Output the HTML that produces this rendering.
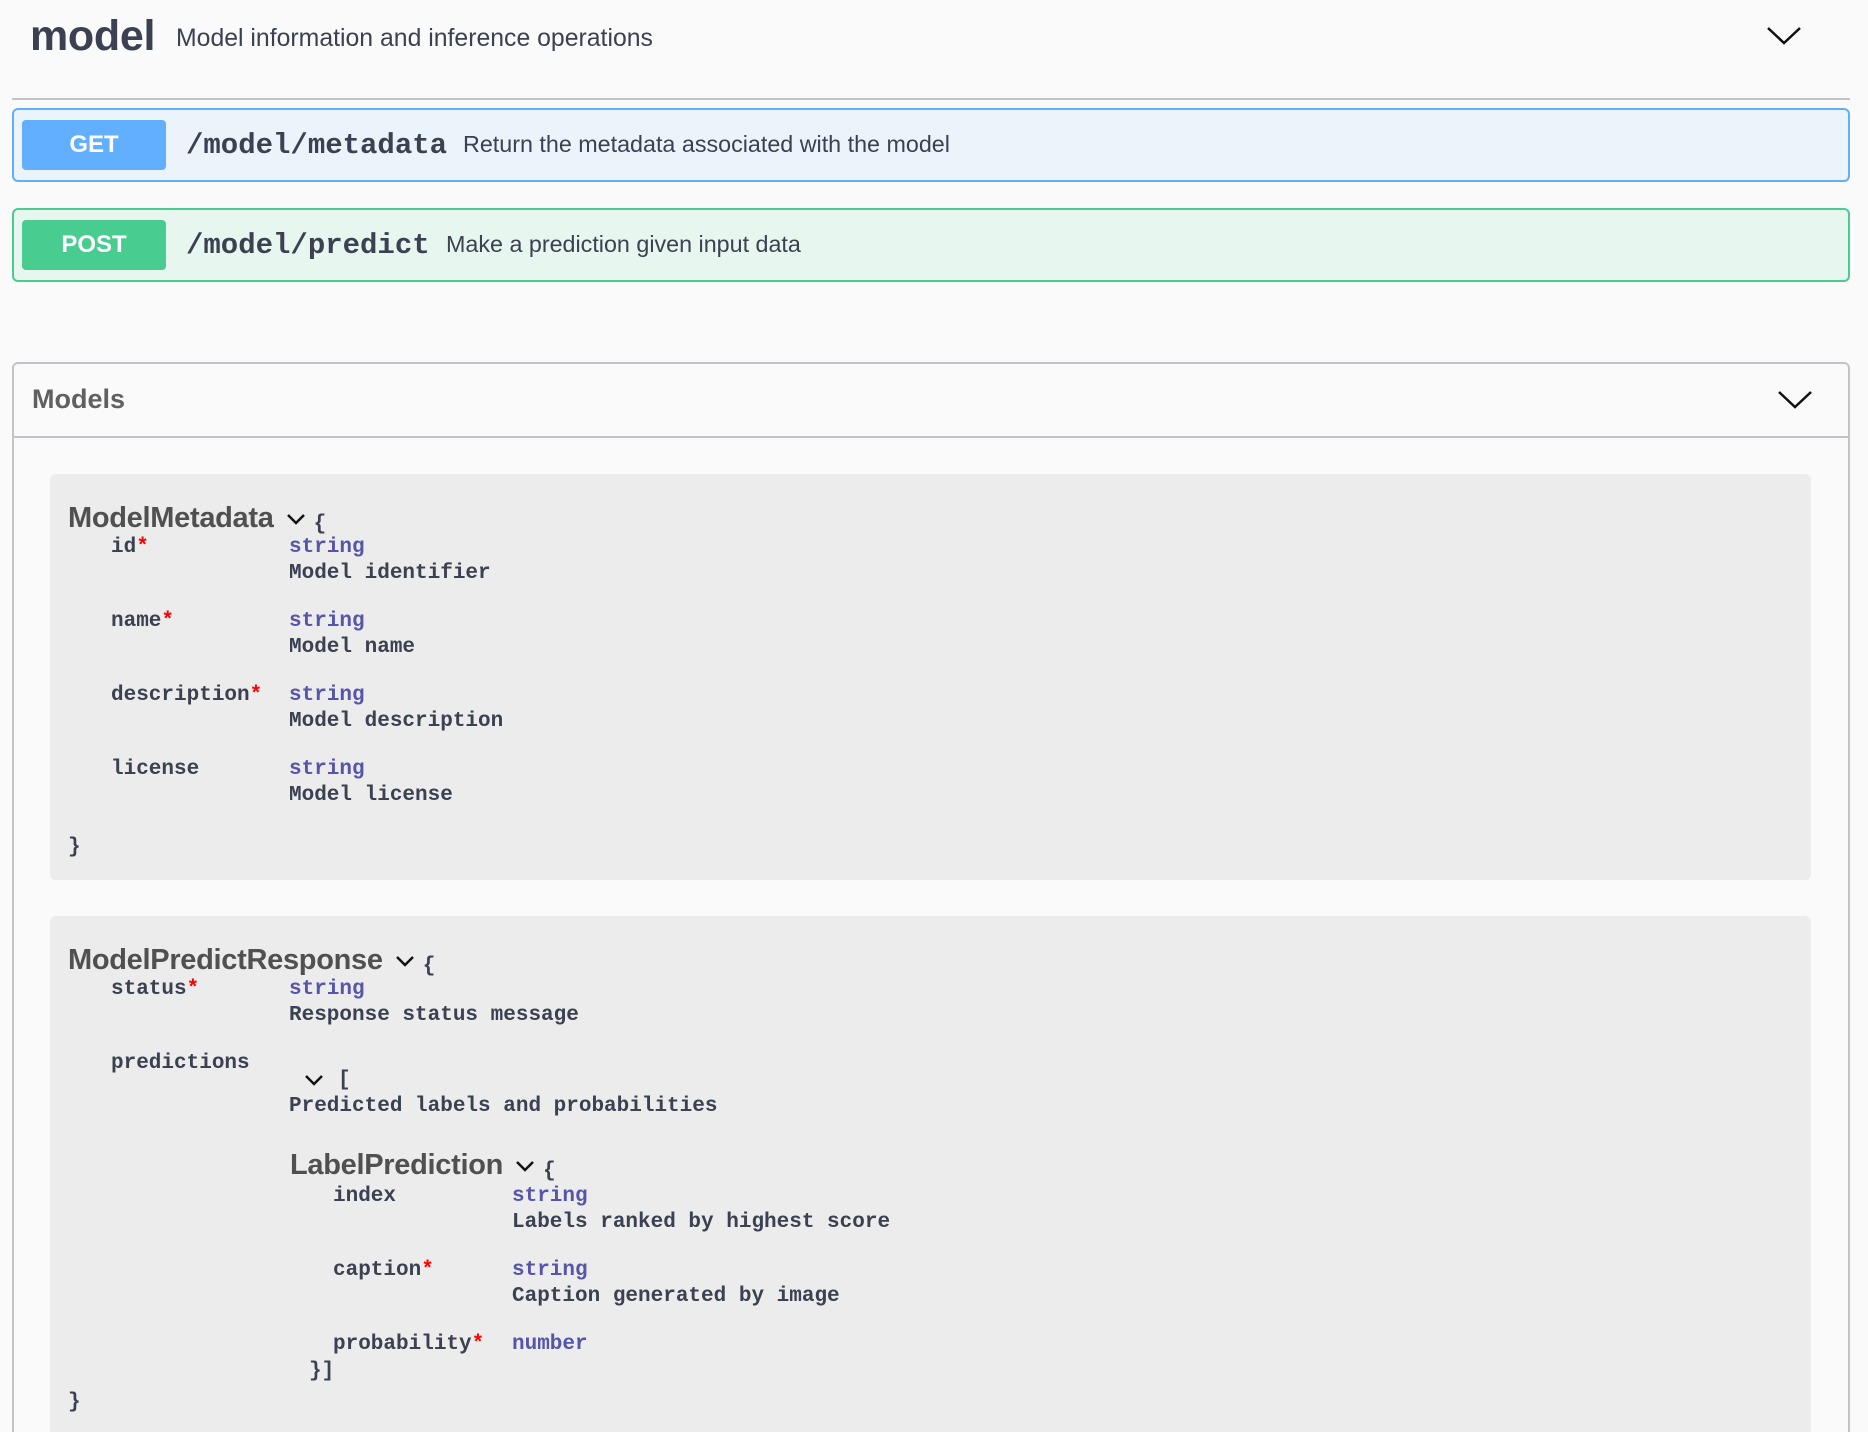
<!DOCTYPE html>
<html><head><meta charset="utf-8"><style>
*{margin:0;padding:0;box-sizing:border-box}
html,body{width:1868px;height:1432px;overflow:hidden}
body{background:#fafafa;position:relative;font-family:"Liberation Sans",Arial,sans-serif;color:#3b4151}
.a{position:absolute;white-space:nowrap}
.mono{font-family:"Liberation Mono","Courier New",monospace;font-weight:bold}
.op{position:absolute;left:12px;width:1838px;height:74px;border-radius:6px;border:2px solid}
.badge{position:absolute;left:8px;top:10px;width:144px;height:50px;border-radius:4px;color:#fff;font-weight:bold;font-size:24px;text-align:center;line-height:50px}
.path{position:absolute;left:172px;top:19px;font-size:29px;color:#3b4151}
.desc{position:absolute;top:21px;font-size:23.3px;color:#3b4151}
.gbox{position:absolute;left:50px;width:1761px;background:#ececec;border-radius:6px}
.t{font-size:29px;font-weight:bold;color:#505050;letter-spacing:-0.3px}
.t svg{margin:0 8px 0 12px;vertical-align:middle}
.t b{font-family:"Liberation Mono",monospace;font-size:21px;color:#3b4151;vertical-align:-2px}
.k{font-size:21px;color:#3b4151}
.v{font-size:21px;color:#55a}
.r{color:#f00}
</style></head><body>
<div class="a" style="left:30px;top:12px;font-size:43px;font-weight:bold;color:#3b4151;letter-spacing:-0.3px">model</div>
<div class="a" style="left:176px;top:25px;font-size:24.8px;color:#3b4151">Model information and inference operations</div>
<svg class="a" style="left:1766px;top:26px" width="36" height="20"><path d="M2 2 L18 17 L34 2" fill="none" stroke="#111" stroke-width="2.5"/></svg>
<div class="a" style="left:12px;top:98px;width:1838px;height:2px;background:#c4c4c8"></div>

<div class="op" style="top:108px;background:#ebf3fb;border-color:#61affe">
<div class="badge" style="background:#61affe">GET</div>
<div class="path mono">/model/metadata</div>
<div class="desc" style="left:449px">Return the metadata associated with the model</div>
</div>
<div class="op" style="top:208px;background:#e8f6f0;border-color:#49cc90">
<div class="badge" style="background:#49cc90">POST</div>
<div class="path mono">/model/predict</div>
<div class="desc" style="left:432px">Make a prediction given input data</div>
</div>

<div class="a" style="left:12px;top:362px;width:1838px;height:1200px;border:2px solid #c4c4c8;border-radius:6px"></div>
<div class="a" style="left:12px;top:436px;width:1838px;height:2px;background:#c4c4c8"></div>
<div class="a" style="left:32px;top:384px;font-size:27px;font-weight:bold;color:#606060">Models</div>
<svg class="a" style="left:1777px;top:390px" width="36" height="20"><path d="M2 2 L18 17 L34 2" fill="none" stroke="#111" stroke-width="2.5"/></svg>

<div class="gbox" style="top:474px;height:406px"></div>
<div class="a t" style="left:68px;top:502px">ModelMetadata<svg width="20" height="14"><path d="M2 3 L10 11 L18 3" fill="none" stroke="#111" stroke-width="2.5"/></svg><b>{</b></div>
<div class="a mono k" style="left:111px;top:536px">id<span class="r">*</span></div>
<div class="a mono v" style="left:289px;top:536px">string</div>
<div class="a mono k" style="left:289px;top:562px">Model identifier</div>
<div class="a mono k" style="left:111px;top:610px">name<span class="r">*</span></div>
<div class="a mono v" style="left:289px;top:610px">string</div>
<div class="a mono k" style="left:289px;top:636px">Model name</div>
<div class="a mono k" style="left:111px;top:684px">description<span class="r">*</span></div>
<div class="a mono v" style="left:289px;top:684px">string</div>
<div class="a mono k" style="left:289px;top:710px">Model description</div>
<div class="a mono k" style="left:111px;top:758px">license</div>
<div class="a mono v" style="left:289px;top:758px">string</div>
<div class="a mono k" style="left:289px;top:784px">Model license</div>
<div class="a mono k" style="left:68px;top:836px">}</div>

<div class="gbox" style="top:916px;height:600px"></div>
<div class="a t" style="left:68px;top:944px">ModelPredictResponse<svg width="20" height="14"><path d="M2 3 L10 11 L18 3" fill="none" stroke="#111" stroke-width="2.5"/></svg><b>{</b></div>
<div class="a mono k" style="left:111px;top:978px">status<span class="r">*</span></div>
<div class="a mono v" style="left:289px;top:978px">string</div>
<div class="a mono k" style="left:289px;top:1004px">Response status message</div>
<div class="a mono k" style="left:111px;top:1052px">predictions</div>
<svg class="a" style="left:304px;top:1073px" width="20" height="14"><path d="M2 3 L10 11 L18 3" fill="none" stroke="#111" stroke-width="2.5"/></svg>
<div class="a mono k" style="left:338px;top:1069px">[</div>
<div class="a mono k" style="left:289px;top:1095px">Predicted labels and probabilities</div>
<div class="a t" style="left:290px;top:1149px">LabelPrediction<svg width="20" height="14"><path d="M2 3 L10 11 L18 3" fill="none" stroke="#111" stroke-width="2.5"/></svg><b>{</b></div>
<div class="a mono k" style="left:333px;top:1185px">index</div>
<div class="a mono v" style="left:512px;top:1185px">string</div>
<div class="a mono k" style="left:512px;top:1211px">Labels ranked by highest score</div>
<div class="a mono k" style="left:333px;top:1259px">caption<span class="r">*</span></div>
<div class="a mono v" style="left:512px;top:1259px">string</div>
<div class="a mono k" style="left:512px;top:1285px">Caption generated by image</div>
<div class="a mono k" style="left:333px;top:1333px">probability<span class="r">*</span></div>
<div class="a mono v" style="left:512px;top:1333px">number</div>
<div class="a mono k" style="left:309px;top:1360px">}]</div>
<div class="a mono k" style="left:68px;top:1391px">}</div>
</body></html>
